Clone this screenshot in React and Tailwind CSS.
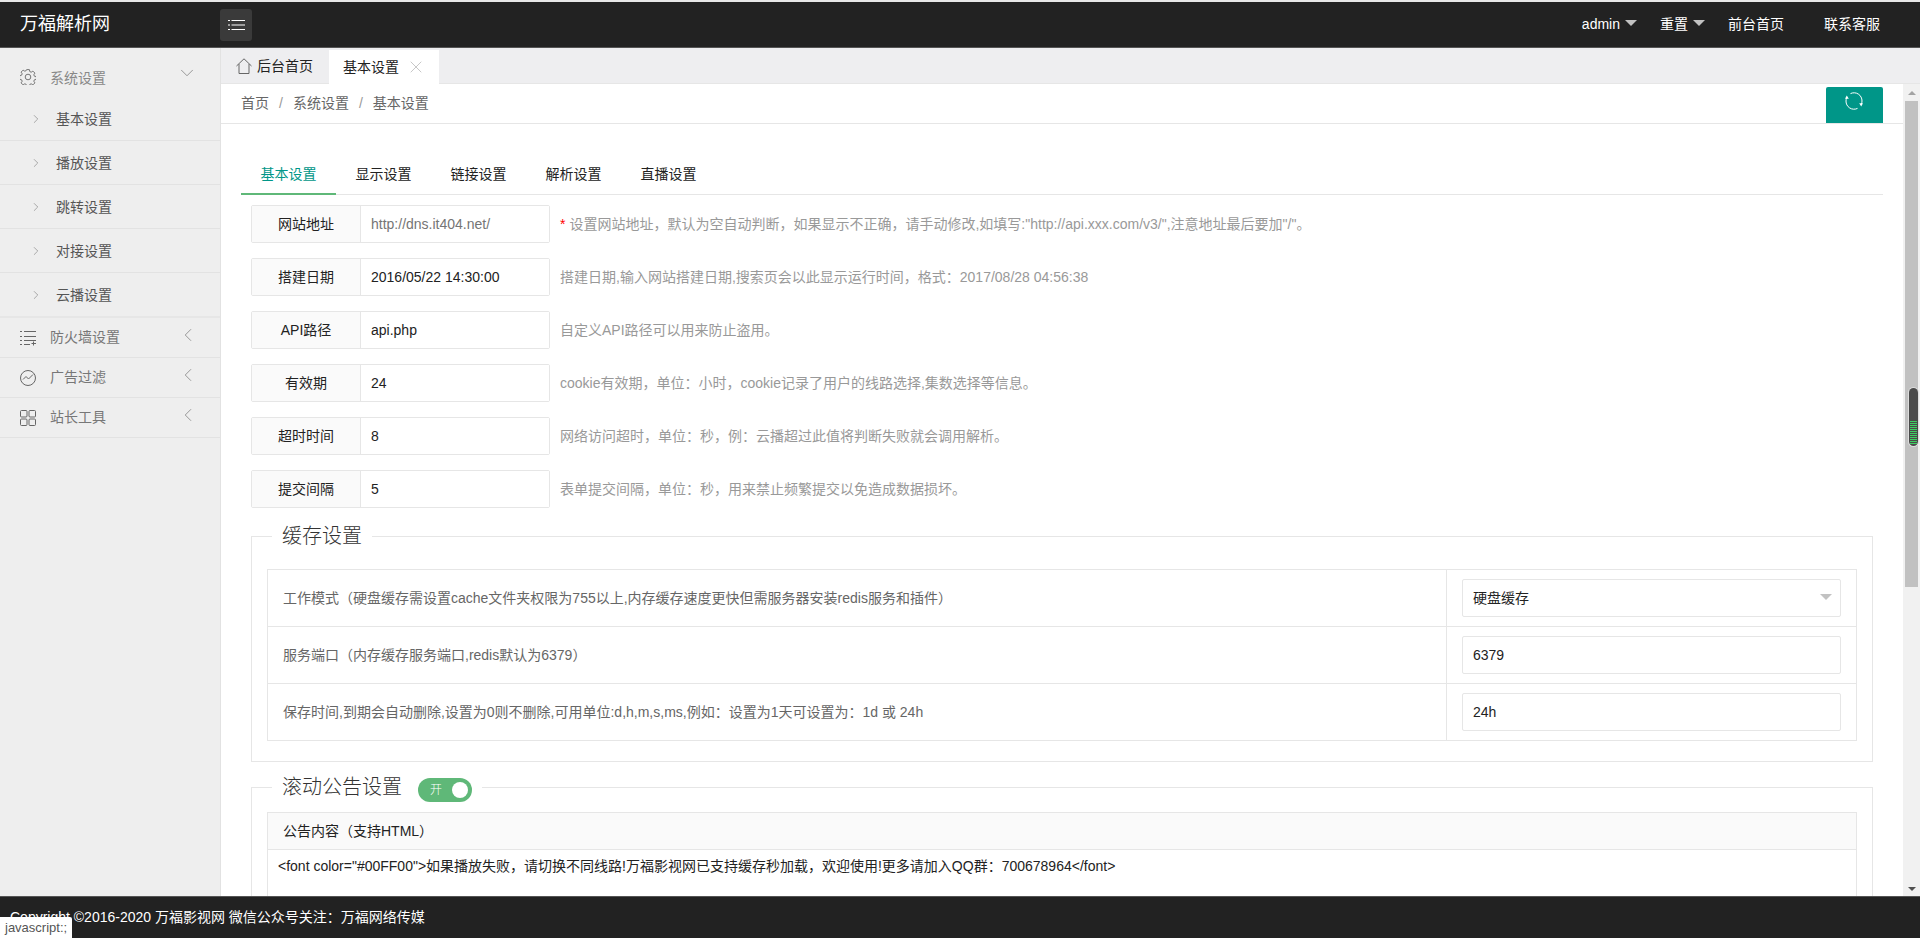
import { ChevronRight, ChevronDown, ChevronLeft, X } from 'lucide-react';

const subMenu = ['基本设置', '播放设置', '跳转设置', '对接设置', '云播设置'];
const tabs = ['基本设置', '显示设置', '链接设置', '解析设置', '直播设置'];

const fields = [
  { label: '网站地址', placeholder: 'http://dns.it404.net/', required: true, help: '设置网站地址，默认为空自动判断，如果显示不正确，请手动修改,如填写:"http://api.xxx.com/v3/",注意地址最后要加"/"。' },
  { label: '搭建日期', value: '2016/05/22 14:30:00', help: '搭建日期,输入网站搭建日期,搜索页会以此显示运行时间，格式：2017/08/28 04:56:38' },
  { label: 'API路径', value: 'api.php', help: '自定义API路径可以用来防止盗用。' },
  { label: '有效期', value: '24', help: 'cookie有效期，单位：小时，cookie记录了用户的线路选择,集数选择等信息。' },
  { label: '超时时间', value: '8', help: '网络访问超时，单位：秒，例：云播超过此值将判断失败就会调用解析。' },
  { label: '提交间隔', value: '5', help: '表单提交间隔，单位：秒，用来禁止频繁提交以免造成数据损坏。' },
];

const cacheRows = [
  { label: '工作模式（硬盘缓存需设置cache文件夹权限为755以上,内存缓存速度更快但需服务器安装redis服务和插件）', value: '硬盘缓存', select: true },
  { label: '服务端口（内存缓存服务端口,redis默认为6379）', value: '6379' },
  { label: '保存时间,到期会自动删除,设置为0则不删除,可用单位:d,h,m,s,ms,例如：设置为1天可设置为：1d 或 24h', value: '24h' },
];

const Caret = ({ className }) => (
  <span className={`h-0 w-0 border-x-[6px] border-t-[6px] border-x-transparent border-t-[#c2c2c2] ${className || ''}`} />
);

const GearIcon = () => (
  <svg width="16" height="16" viewBox="0 0 16 16" fill="none" stroke="#777" strokeWidth="1">
    <circle cx="8" cy="8" r="2.8" />
    <path d="M6.6.6h2.8l.4 2 1.4.6 1.7-1.1 2 2-1.1 1.7.6 1.4 2 .4v2.8l-2 .4-.6 1.4 1.1 1.7-2 2-1.7-1.1-1.4.6-.4 2H6.6l-.4-2-1.4-.6-1.7 1.1-2-2 1.1-1.7-.6-1.4-2-.4V6.6l2-.4.6-1.4-1.1-1.7 2-2 1.7 1.1 1.4-.6z" />
  </svg>
);

const ListIcon = () => (
  <svg width="17" height="16" viewBox="0 0 17 16" fill="none" stroke="#666" strokeWidth="1">
    <path d="M0 1.5h2M4 1.5h12M0 6.5h2M4 6.5h12M0 10.5h2M4 10.5h12M0 14.5h2M4 14.5h6M13.5 11.5v4M11.5 13.5h4.5" />
  </svg>
);

const ChartIcon = () => (
  <svg width="16" height="16" viewBox="0 0 16 16" fill="none" stroke="#666" strokeWidth="1">
    <circle cx="8" cy="8" r="7.5" />
    <path d="M3 9.5l3-3 2.5 2.5 4.5-4.5" />
  </svg>
);

const GridIcon = () => (
  <svg width="16" height="16" viewBox="0 0 16 16" fill="none" stroke="#666" strokeWidth="1">
    <rect x="0.5" y="0.5" width="6.5" height="6.5" rx="1" />
    <rect x="9" y="0.5" width="6.5" height="6.5" rx="1" />
    <rect x="0.5" y="9" width="6.5" height="6.5" rx="1" />
    <rect x="9" y="9" width="6.5" height="6.5" rx="1" />
  </svg>
);

const HomeIcon = () => (
  <svg width="16" height="16" viewBox="0 0 16 16" fill="none" stroke="#666" strokeWidth="1">
    <path d="M0.5 8L8 0.8 15.5 8M3 6v9.5h10V6" />
  </svg>
);

const MenuIcon = () => (
  <svg width="17" height="12" viewBox="0 0 17 12" fill="none" stroke="#fff" strokeWidth="1.2">
    <path d="M0 1.5h2M3.5 1.5h13.5M0 6h2M3.5 6h13.5M0 10.5h2M3.5 10.5h13.5" />
  </svg>
);

const RefreshIcon = () => (
  <svg width="18" height="18" viewBox="0 0 18 18" fill="none" stroke="#fff" strokeWidth="1">
    <path d="M5.5 1.6A8 8 0 0 1 17 9c0 1.2-.3 2.3-.7 3.2M12.5 16.4A8 8 0 0 1 1 9c0-1.2.3-2.3.7-3.2" />
    <path d="M1.8 3.4l2 3.4H0zM16.2 14.6l-2-3.4H18z" fill="#fff" stroke="none" />
  </svg>
);

const Sidebar = () => (
  <aside className="flex w-[221px] shrink-0 flex-col border-r border-[#e2e2e2] bg-[#eeeeee]">
    <div className="flex h-[49px] shrink-0 items-start pl-5 pr-[22px] pt-[21px] text-[#888]">
      <GearIcon />
      <span className="-mt-[1px] ml-[14px] flex-1 text-[14px] leading-[20px]">系统设置</span>
      <ChevronDown size={22} strokeWidth={0.8} className="-mt-[7px] text-[#777]" />
    </div>
    <div className="border-b-2 border-[#e6e6e6]">
      {subMenu.map((item, i) => (
        <div key={item} className={`flex items-center pl-[29px] text-[14px] text-[#555] ${i < 4 ? 'h-[44px] border-b border-[#e2e2e2]' : 'h-[43px]'}`}>
          <ChevronRight size={14} strokeWidth={1} className="text-[#777]" />
          <span className="ml-[13px] mt-[1px]">{item}</span>
        </div>
      ))}
    </div>
    {[
      ['防火墙设置', <ListIcon key="a" />],
      ['广告过滤', <ChartIcon key="b" />],
      ['站长工具', <GridIcon key="c" />],
    ].map(([name, icon]) => (
      <div key={name} className="flex h-[40px] items-center border-b border-[#e2e2e2] pl-5 pr-[21px] text-[14px] text-[#777]">
        <span className="flex w-[30px] shrink-0">{icon}</span>
        <span className="flex-1">{name}</span>
        <ChevronLeft size={22} strokeWidth={0.8} className="-mt-[5px] text-[#777]" />
      </div>
    ))}
  </aside>
);

const FieldRow = ({ label, value, placeholder, required, help }) => (
  <div className="flex h-[38px] items-center">
    <div className="flex h-full w-[299px] shrink-0 rounded-[2px] border border-[#e6e6e6]">
      <label className="flex w-[109px] shrink-0 items-center justify-center border-r border-[#e6e6e6] bg-[#fafafa] text-[14px] text-[#222]">{label}</label>
      <input readOnly value={value || ''} placeholder={placeholder} className="min-w-0 flex-1 bg-white pl-[10px] text-[14px] text-[#222] outline-none placeholder:text-[#757575]" />
    </div>
    <p className="ml-[10px] text-[14px] text-[#999]">
      {required && <span className="mr-[4px] text-[#f00]">*</span>}
      {help}
    </p>
  </div>
);

const Legend = ({ children }) => (
  <div className="absolute -top-[15px] left-[20px] flex h-[28px] items-center bg-white px-[10px] text-[20px] font-light text-[#333]">
    {children}
  </div>
);

const App = () => (
  <div className="relative flex h-screen w-full flex-col overflow-hidden bg-white font-['Liberation_Sans','Noto_Sans_CJK_SC',sans-serif]">
    <div className="h-[2px] shrink-0 bg-[#e8e8e8]" />
    <header className="flex h-[46px] shrink-0 items-center border-b border-[#555] bg-[#222222] pl-5 text-white">
      <div className="w-[200px] text-[18px]">万福解析网</div>
      <button className="flex h-[32px] w-[32px] items-center justify-center rounded-[3px] bg-[#3a3a3a]">
        <MenuIcon />
      </button>
      <nav className="ml-auto flex items-center pr-[40px] text-[14px]">
        <span>admin</span>
        <Caret className="ml-[5px] mt-[-4px]" />
        <span className="ml-[23px]">重置</span>
        <Caret className="ml-[5px] mt-[-4px]" />
        <span className="ml-[23px]">前台首页</span>
        <span className="ml-[40px]">联系客服</span>
      </nav>
    </header>

    <div className="flex min-h-0 flex-1">
      <Sidebar />
      <main className="flex min-w-0 flex-1 flex-col">
        <div className="flex h-[36px] shrink-0 items-end border-b border-[#e6e6e6] bg-[#eeeef0] text-[14px] text-[#222]">
          <div className="flex h-[34px] w-[108px] items-center pl-[15px]">
            <HomeIcon />
            <span className="ml-[5px]">后台首页</span>
          </div>
          <div className="-mb-px flex h-[34px] w-[110px] items-center bg-white pl-[14px]">
            <span>基本设置</span>
            <X size={20} strokeWidth={0.8} className="ml-[7px] text-[#aaa]" />
          </div>
        </div>

        <div className="flex min-h-0 flex-1">
          <div className="min-w-0 flex-1 overflow-hidden">
            <div className="flex h-[40px] items-start justify-between border-b border-[#e6e6e6] pl-5 pr-5">
              <div className="flex h-full items-center text-[14px] text-[#666]">
                <span>首页</span>
                <span className="mx-[10px] text-[#999]">/</span>
                <span>系统设置</span>
                <span className="mx-[10px] text-[#999]">/</span>
                <span>基本设置</span>
              </div>
              <button className="mt-[3px] flex h-[36px] w-[57px] items-start justify-center rounded-t-[2px] bg-[#009688] pr-[2px] pt-[5px]">
                <RefreshIcon />
              </button>
            </div>

            <div className="pl-5 pr-5 pt-[31px]">
              <div className="flex h-[40px] border-b border-[#e6e6e6] text-[14px] text-[#222]">
                {tabs.map((tab, i) => (
                  <div key={tab} className={`-mb-px flex h-[40px] w-[95px] items-center justify-center border-b-2 ${i === 0 ? 'border-[#5fb878] text-[#009688]' : 'border-transparent'}`}>
                    {tab}
                  </div>
                ))}
              </div>

              <div className="flex flex-col gap-[15px] pl-[10px] pt-[10px]">
                {fields.map((f) => (
                  <FieldRow key={f.label} {...f} />
                ))}
              </div>

              <section className="relative ml-[10px] mr-[10px] mt-[28px] border border-[#e6e6e6] px-[15px] pb-[20px] pt-[32px]">
                <Legend>缓存设置</Legend>
                <div className="border border-[#e6e6e6]">
                  {cacheRows.map((row, i) => (
                    <div key={row.label} className={`flex ${i < 2 ? 'h-[57px] border-b border-[#e6e6e6]' : 'h-[56px]'}`}>
                      <div className="flex flex-1 items-center border-r border-[#e6e6e6] pl-[15px] text-[14px] text-[#666]">{row.label}</div>
                      <div className="flex w-[409px] shrink-0 items-center px-[15px]">
                        <div className="flex h-[38px] w-full items-center justify-between rounded-[2px] border border-[#e6e6e6] pl-[10px] pr-[8px] text-[14px] text-[#222]">
                          {row.value}
                          {row.select && <Caret className="mt-[-2px]" />}
                        </div>
                      </div>
                    </div>
                  ))}
                </div>
              </section>

              <section className="relative ml-[10px] mr-[10px] mt-[25px] h-[200px] border border-[#e6e6e6] px-[15px] pt-[24px]">
                <Legend>
                  滚动公告设置
                  <span className="ml-[16px] mt-[6px] flex h-[24px] w-[54px] items-center justify-between rounded-full bg-[#5fb878] pl-[12px] pr-[4px] text-[12px] text-white">
                    开
                    <span className="h-[16px] w-[16px] rounded-full bg-white" />
                  </span>
                </Legend>
                <div className="border border-[#e6e6e6]">
                  <div className="flex h-[37px] items-center border-b border-[#e6e6e6] bg-[#fafafa] pl-[15px] text-[14px] text-[#222]">公告内容（支持HTML）</div>
                  <div className="h-[100px] px-[10px] pt-[6px] text-[14px] text-[#222]">{'<font color="#00FF00">如果播放失败，请切换不同线路!万福影视网已支持缓存秒加载，欢迎使用!更多请加入QQ群：700678964</font>'}</div>
                </div>
              </section>
            </div>
          </div>

          <div className="flex w-[17px] shrink-0 flex-col items-center bg-[#f1f1f1]">
            <span className="mt-[7px] h-0 w-0 border-x-[4px] border-b-[4px] border-x-transparent border-b-[#a3a3a3]" />
            <div className="mt-[6px] h-[486px] w-[13px] bg-[#c1c1c1]" />
            <span className="mt-auto mb-[5px] h-0 w-0 border-x-[4px] border-t-[4px] border-x-transparent border-t-[#505050]" />
          </div>
        </div>
      </main>
    </div>

    <footer className="flex h-[42px] shrink-0 items-center border-t border-[#555] bg-[#222222] pl-[10px] text-[14px] text-white">
      Copyright ©2016-2020 万福影视网 微信公众号关注：万福网络传媒
    </footer>

    {/* volume overlay */}
    <div className="absolute left-[1909px] top-[388px] flex h-[58px] w-[9px] flex-col justify-end gap-[1px] rounded-full bg-[#4a4a4a] px-[1px] pb-[2px] ring-1 ring-[#dddddd]">
      {Array.from({ length: 12 }).map((_, i) => (
        <span key={i} className="h-[1px] bg-[#3ecf62]" />
      ))}
    </div>

    {/* link status tooltip */}
    <div className="absolute bottom-0 left-0 flex h-[21px] w-[72px] items-center rounded-tr-[2px] bg-white pl-[5px] text-[13px] text-[#555]">javascript:;</div>
  </div>
);

export default App;
